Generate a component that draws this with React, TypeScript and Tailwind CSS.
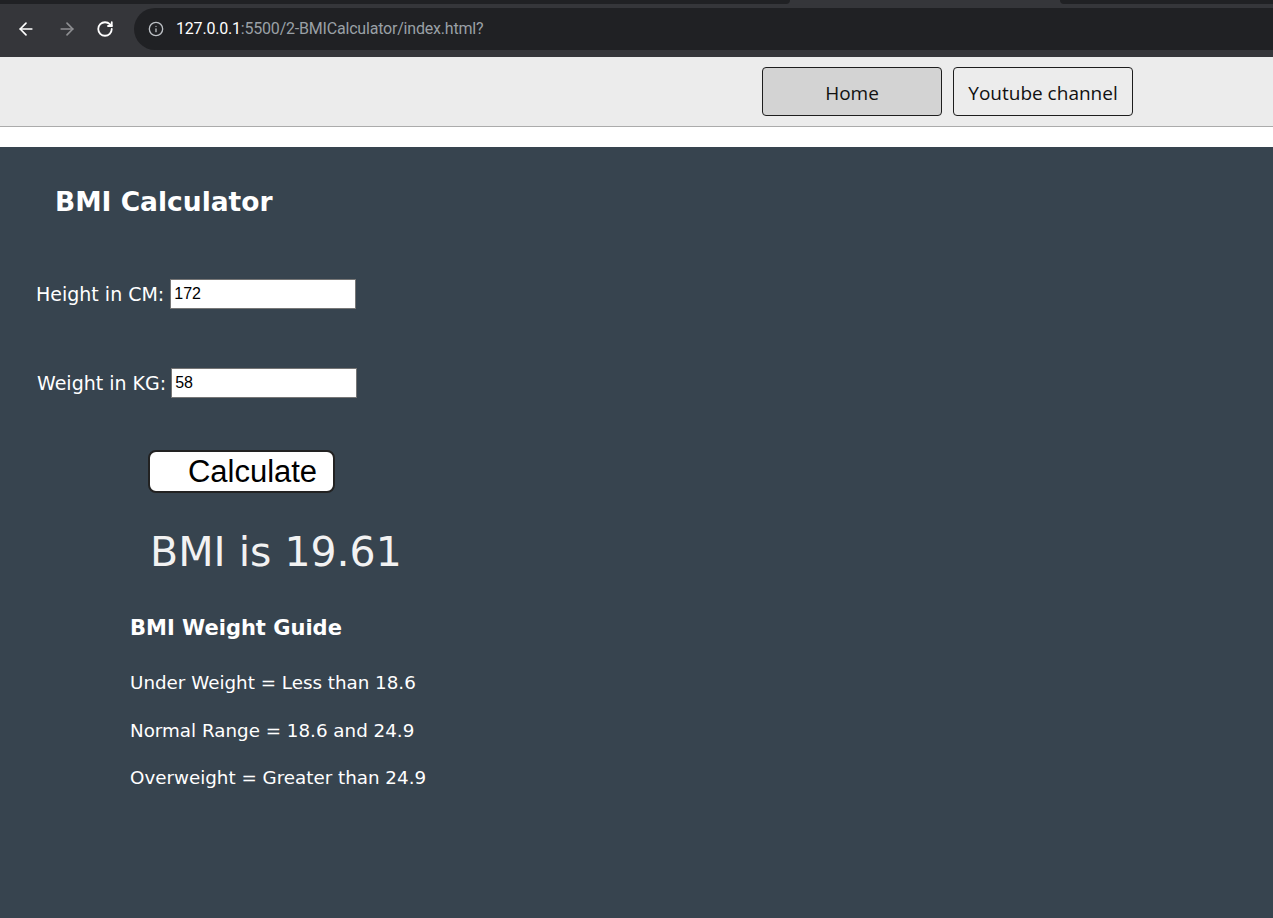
import { ArrowLeft, ArrowRight, RotateCw, Info } from "lucide-react";

const comic = "font-['DejaVu_Sans',sans-serif]";

function BrowserBar() {
    return (
        <div className="bg-[#35363a] h-[57px] flex flex-col">
            {/* tab strip remnant */}
            <div className="flex h-[4px]">
                <div className="w-[790px] bg-[#202124] rounded-br-lg" />
                <div className="w-[270px] bg-[#35363a]" />
                <div className="flex-1 bg-[#202124] rounded-bl-lg" />
            </div>
            <div className="flex items-center h-[48px] pt-[1px]">
                <ArrowLeft className="ml-[16px] text-white" size={20} strokeWidth={2} />
                <ArrowRight className="ml-[21px] text-[#8e8f92]" size={20} strokeWidth={2} />
                <RotateCw className="ml-[19px] text-white" size={18} strokeWidth={2.4} />
                <div className="ml-[20px] flex-1 h-[42px] rounded-l-full bg-[#202124] flex items-center pl-[14px]">
                    <Info className="text-[#bdc1c6]" size={16} strokeWidth={2} />
                    <div className="ml-[12px] text-[16px] font-['Roboto',sans-serif] tracking-[-0.2px]">
                        <span className="text-white">127.0.0.1</span>
                        <span className="text-[#9aa0a6]">:5500/2-BMICalculator/index.html?</span>
                    </div>
                </div>
            </div>
            <div className="h-[4px]" />
        </div>
    );
}

function Navbar() {
    return (
        <div className="bg-[#ececec] h-[70px] border-b border-[#ababab] flex items-start justify-end pr-[140px] pt-[10px] gap-[11px] font-['Open_Sans',sans-serif]">
            <button className="w-[180px] h-[49px] pt-[3px] bg-[#d3d3d3] border border-[#1e1e1e] rounded-[4px] text-[19px] text-[#111]">
                Home
            </button>
            <button className="w-[180px] h-[49px] pt-[3px] bg-[#ececec] border border-[#1e1e1e] rounded-[4px] text-[19px] text-[#111]">
                Youtube channel
            </button>
        </div>
    );
}

export default function App() {
    return (
        <div className="w-[1273px] h-[918px] flex flex-col overflow-hidden">
            <BrowserBar />
            <Navbar />
            <div className="h-[20px] bg-white" />
            <div className={`flex-1 bg-[#37444f] text-white ${comic}`}>
                <h1 className="ml-[55px] mt-[39px] text-[26.5px] font-bold leading-[32px]">BMI Calculator</h1>

                <div className="mt-[61px] ml-[36px] flex items-center gap-[6px]">
                    <label className="text-[19px]">Height in CM:</label>
                    <input
                        defaultValue="172"
                        className="w-[186px] h-[30px] bg-white border border-[#767676] text-black text-[16px] px-[3px] font-['Liberation_Sans',sans-serif] outline-none"
                    />
                </div>

                <div className="mt-[59px] ml-[37px] flex items-center gap-[5px]">
                    <label className="text-[19px]">Weight in KG:</label>
                    <input
                        defaultValue="58"
                        className="w-[186px] h-[30px] bg-white border border-[#767676] text-black text-[16px] px-[3px] font-['Liberation_Sans',sans-serif] outline-none"
                    />
                </div>

                <button className="mt-[52px] ml-[148px] w-[187px] h-[43px] bg-white border-2 border-[#222] rounded-[8px] text-black text-[31px] leading-none pl-[22px] font-['Liberation_Sans',sans-serif]">
                    Calculate
                </button>

                <div className="mt-[34px] ml-[150px] text-[41px] leading-[50px] text-[#f2f2f2]">BMI is 19.61</div>

                <div className="ml-[130px] mt-[38px]">
                    <h3 className="text-[21px] font-bold leading-[26px]">BMI Weight Guide</h3>
                    <p className="mt-[31px] text-[18.3px] leading-[22px]">Under Weight = Less than 18.6</p>
                    <p className="mt-[26px] text-[18.3px] leading-[22px]">Normal Range = 18.6 and 24.9</p>
                    <p className="mt-[25px] text-[18.3px] leading-[22px]">Overweight = Greater than 24.9</p>
                </div>
            </div>
        </div>
    );
}
